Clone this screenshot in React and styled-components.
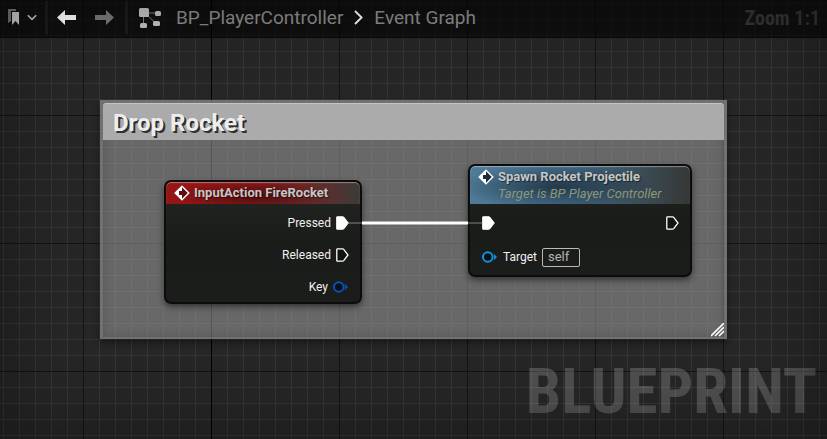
import React from "react";
import styled, { createGlobalStyle, css } from "styled-components";

const Global = createGlobalStyle`
  *, *::before, *::after { box-sizing: border-box; }
  body { margin: 0; background: #262626; font-family: Roboto, "Liberation Sans", sans-serif; }
  button, input { font: inherit; }
`;

const Editor = styled.div`
  position: relative;
  display: flex;
  flex-direction: column;
  min-height: 100vh;
  overflow: hidden;
  background-color: #262626;
  background-image:
    linear-gradient(90deg, #000 1px, transparent 1px),
    linear-gradient(90deg, #141414 1px, transparent 1px),
    linear-gradient(#141414 1px, transparent 1px),
    linear-gradient(90deg, #353535 1px, transparent 1px),
    linear-gradient(#353535 1px, transparent 1px);
  background-size: 1024px 100%, 128px 128px, 128px 128px, 16px 16px, 16px 16px;
  background-position: 211px 0, 83px 0, 0 115px, 3px 0, 0 3px;

  &::after {
    content: "";
    position: absolute;
    inset: 0;
    pointer-events: none;
    box-shadow: inset 0 0 70px rgba(0, 0, 0, 0.4);
  }
`;

const Toolbar = styled.header`
  display: flex;
  align-items: center;
  height: 38px;
  padding: 0 7px 2px 0;
  background: rgba(0, 0, 0, 0.6);
  border-bottom: 1px solid rgba(0, 0, 0, 0.3);
`;

const ToolButton = styled.button`
  display: flex;
  align-items: center;
  justify-content: center;
  gap: 7px;
  width: ${(p) => p.$width}px;
  height: 32px;
  padding: 0;
  border: 0;
  background: none;
`;

const Divider = styled.span`
  width: 3px;
  height: 33px;
  background: #1c1c1c;
`;

const GraphMark = styled.span`
  display: flex;
  padding-left: 11px;
`;

const Crumbs = styled.nav`
  display: flex;
  align-items: center;
  gap: 11px;
  padding-left: 15px;
  font-size: 19px;
  line-height: 24px;
  white-space: nowrap;
`;

const Crumb = styled.a`
  color: #8c8c8c;
  text-decoration: none;
`;

const Zoom = styled.span`
  margin-left: auto;
  font-family: "Roboto Condensed", Roboto, sans-serif;
  font-size: 20px;
  line-height: 24px;
  font-weight: 700;
  color: #343434;
  white-space: nowrap;
`;

const Canvas = styled.main`
  position: relative;
  flex: 1;
`;

const Watermark = styled.div`
  position: absolute;
  right: 10px;
  bottom: 9px;
  font-family: "Roboto Condensed", Roboto, sans-serif;
  font-size: 63px;
  line-height: 76px;
  font-weight: 700;
  color: rgba(255, 255, 255, 0.19);
`;

const placed = css`
  position: absolute;
  left: ${(p) => p.$x}px;
  top: ${(p) => p.$y}px;
  width: ${(p) => p.$w}px;
`;

const CommentBox = styled.section`
  ${placed}
  height: ${(p) => p.$h}px;
  border: 3px solid rgba(120, 120, 120, 0.6);
  border-bottom-width: 2px;
  background: rgba(170, 170, 170, 0.5);
  box-shadow: 0 3px 6px rgba(0, 0, 0, 0.45), inset 0 0 8px rgba(50, 50, 50, 0.35);
`;

const CommentTitle = styled.h2`
  margin: 0;
  padding: 4px 10px 2px;
  border-top: 1px solid #c4c4c4;
  border-radius: 3px 3px 0 0;
  background: #ababab;
  color: #ededed;
  font-size: 24px;
  line-height: 30px;
  font-weight: 700;
  text-shadow: 2px 2px 0 #303030;
`;

const ResizeGrip = styled.svg`
  position: absolute;
  right: 0;
  bottom: 0;
`;

const Wire = styled.svg`
  position: absolute;
  left: ${(p) => p.$x}px;
  top: ${(p) => p.$y}px;
`;

const Node = styled.article`
  ${placed}
  overflow: hidden;
  border: 2px solid #0b0c0b;
  border-radius: 7px;
  background: linear-gradient(#242624, #1a1c1a 50%, #1b1d1a);
  box-shadow: 0 3px 6px rgba(0, 0, 0, 0.5);
  color: #f0f0f0;
  font-size: 12px;
`;

const tones = {
  event: css`
    padding-bottom: 3px;
    background:
      radial-gradient(ellipse 80px 15px at 45% 62%, rgba(45, 5, 5, 0.65), transparent),
      linear-gradient(90deg, #961416 0%, #8e1a1b 45%, #6b2827 72%, #3c3b38 100%);
  `,
  call: css`
    padding-bottom: 1px;
    background:
      radial-gradient(ellipse 100px 22px at 40% 55%, rgba(20, 35, 48, 0.7), transparent),
      linear-gradient(90deg, #4f7b99 0%, #436a86 45%, #3d5260 72%, #353735 100%);
  `,
};

const NodeHeader = styled.header`
  display: flex;
  gap: 4px;
  padding: 2px 8px 0;
  border-radius: 5px 5px 0 0;
  box-shadow: inset 0 1px 1px rgba(255, 255, 255, 0.4);
  ${(p) => tones[p.$tone]}

  svg { flex: none; margin-top: 1px; }
`;

const NodeTitle = styled.h3`
  margin: 0;
  color: #c6c6c6;
  font-size: 13px;
  line-height: 17px;
  font-weight: 700;
  text-shadow: 1px 1px 1px rgba(0, 0, 0, 0.5);
`;

const NodeSubtitle = styled.p`
  margin: 0;
  color: #8b9778;
  font-size: 13px;
  line-height: 18px;
  font-style: italic;
`;

const Pins = styled.div`
  display: flex;
  flex-direction: column;
  gap: ${(p) => p.$gap}px;
  padding: 9px 11px ${(p) => p.$bottom}px 12px;
`;

const PinRow = styled.div`
  display: flex;
  align-items: center;
  justify-content: ${(p) => p.$justify || "flex-start"};
  gap: 5px;
  height: 20px;
  line-height: 20px;

  svg { flex: none; }
`;

const SelfInput = styled.input`
  width: 38px;
  height: 19px;
  padding: 0 5px;
  border: 1px solid #b9b9b9;
  border-radius: 2px;
  background: transparent;
  color: #b4b4b4;
  font-size: 13px;
`;

const ExecPin = ({ filled }) => (
  <svg width="13" height="14" viewBox="0 0 13 14" aria-hidden="true">
    <path
      d="M1.6.8H6.5Q7.2.8 7.7 1.4L12 7 7.7 12.6Q7.2 13.2 6.5 13.2H1.6Q.8 13.2.8 12.4V1.6Q.8.8 1.6.8Z"
      fill={filled ? "#fff" : "#111311"}
      stroke="#fff"
      strokeWidth="1.3"
    />
  </svg>
);

const DataPin = ({ color }) => (
  <svg width="16" height="14" viewBox="0 0 16 14" aria-hidden="true">
    <circle cx="5.8" cy="7" r="4.8" fill="#0b1014" stroke={color} strokeWidth="2" />
    <path d="M11.6 3.6 15 7l-3.4 3.4Q12.7 7 11.6 3.6Z" fill={color} />
  </svg>
);

const EventIcon = ({ ink }) => (
  <svg width="16" height="16" viewBox="0 0 16 16" aria-hidden="true">
    <path d="M8 .2 15.8 8 8 15.8.2 8Z" fill="#fff" />
    <path d="M8 2.2 13.8 8 8 13.8V10H5V6H8Z" fill={ink} />
  </svg>
);

const BookmarkIcon = () => (
  <svg width="12" height="17" viewBox="0 0 12 17" aria-hidden="true">
    <path d="M0 0h8v2H3v10L0 14Z" fill="#787878" />
    <path d="M4 3h7v13L7.5 12 4 16Z" fill="#cfcfcf" />
  </svg>
);

const Chevron = () => (
  <svg width="10" height="7" viewBox="0 0 10 7" fill="none" aria-hidden="true">
    <path d="M.8 1.2 5 5.4 9.2 1.2" stroke="#c8c8c8" strokeWidth="1.6" />
  </svg>
);

const Arrow = ({ color, right }) => (
  <svg width="19" height="15" viewBox="0 0 19 15" aria-hidden="true">
    <path
      d={right ? "M19 7.5 11 0V5H0V10H11V15Z" : "M0 7.5 8 0V5H19V10H8V15Z"}
      fill={color}
    />
  </svg>
);

const GraphIcon = () => (
  <svg width="22" height="20" viewBox="0 0 22 20" aria-hidden="true">
    <path d="M5 5H18M4.5 5V16M6 5 17 15.5" stroke="#858585" strokeWidth="1" fill="none" />
    <g fill="#c4c4c4">
      <rect x="0" y="0" width="10" height="9" rx="1.5" />
      <rect x="16" y="3" width="6" height="5" rx="1.5" />
      <rect x="1" y="15" width="7" height="5" rx="1.5" />
      <rect x="14" y="13" width="7" height="5" rx="1.5" />
    </g>
  </svg>
);

const CrumbArrow = () => (
  <svg width="9" height="15" viewBox="0 0 9 15" fill="none" aria-hidden="true">
    <path d="M1 1 7.6 7.5 1 14" stroke="#fff" strokeWidth="1.8" />
  </svg>
);

export default function App() {
  return (
    <>
      <Global />
      <Editor>
        <Toolbar>
          <ToolButton $width={45} aria-label="Bookmarks">
            <BookmarkIcon />
            <Chevron />
          </ToolButton>
          <Divider />
          <ToolButton $width={36} aria-label="Back"><Arrow color="#fff" /></ToolButton>
          <ToolButton $width={41} aria-label="Forward"><Arrow color="#7a7a7a" right /></ToolButton>
          <Divider />
          <GraphMark><GraphIcon /></GraphMark>
          <Crumbs aria-label="Breadcrumb">
            <Crumb href="#controller">BP_PlayerController</Crumb>
            <CrumbArrow />
            <Crumb href="#event-graph">Event Graph</Crumb>
          </Crumbs>
          <Zoom>Zoom 1:1</Zoom>
        </Toolbar>

        <Canvas>
          <Watermark>BLUEPRINT</Watermark>

          <CommentBox $x={100} $y={62} $w={627} $h={239}>
            <CommentTitle>Drop Rocket</CommentTitle>
            <ResizeGrip width="13" height="14" viewBox="0 0 13 14" aria-hidden="true">
              <path d="M0 13 13 0M4 13 13 4M8 13 13 8" stroke="#fff" strokeWidth="1.6" />
            </ResizeGrip>
          </CommentBox>

          <Node $x={164} $y={142} $w={198}>
            <NodeHeader $tone="event">
              <EventIcon ink="#5f0d0e" />
              <NodeTitle>InputAction FireRocket</NodeTitle>
            </NodeHeader>
            <Pins $gap={12} $bottom={5}>
              <PinRow $justify="flex-end">Pressed<ExecPin filled /></PinRow>
              <PinRow $justify="flex-end">Released<ExecPin /></PinRow>
              <PinRow $justify="flex-end">Key<DataPin color="#0b50b8" /></PinRow>
            </Pins>
          </Node>

          <Node $x={468} $y={126} $w={224}>
            <NodeHeader $tone="call">
              <EventIcon ink="#1d2f3d" />
              <div>
                <NodeTitle>Spawn Rocket Projectile</NodeTitle>
                <NodeSubtitle>Target is BP Player Controller</NodeSubtitle>
              </div>
            </NodeHeader>
            <Pins $gap={14} $bottom={8}>
              <PinRow $justify="space-between"><ExecPin filled /><ExecPin /></PinRow>
              <PinRow>
                <DataPin color="#0e93dc" />
                <label htmlFor="target">Target</label>
                <SelfInput id="target" defaultValue="self" />
              </PinRow>
            </Pins>
          </Node>

          <Wire $x={348} $y={183} width="134" height="4" viewBox="0 0 134 4" aria-hidden="true">
            <path d="M0 2H14M120 2H134" stroke="#fff" strokeWidth="2" opacity="0.22" />
            <path d="M14 2H120" stroke="#fff" strokeWidth="3" />
          </Wire>
        </Canvas>
      </Editor>
    </>
  );
}
